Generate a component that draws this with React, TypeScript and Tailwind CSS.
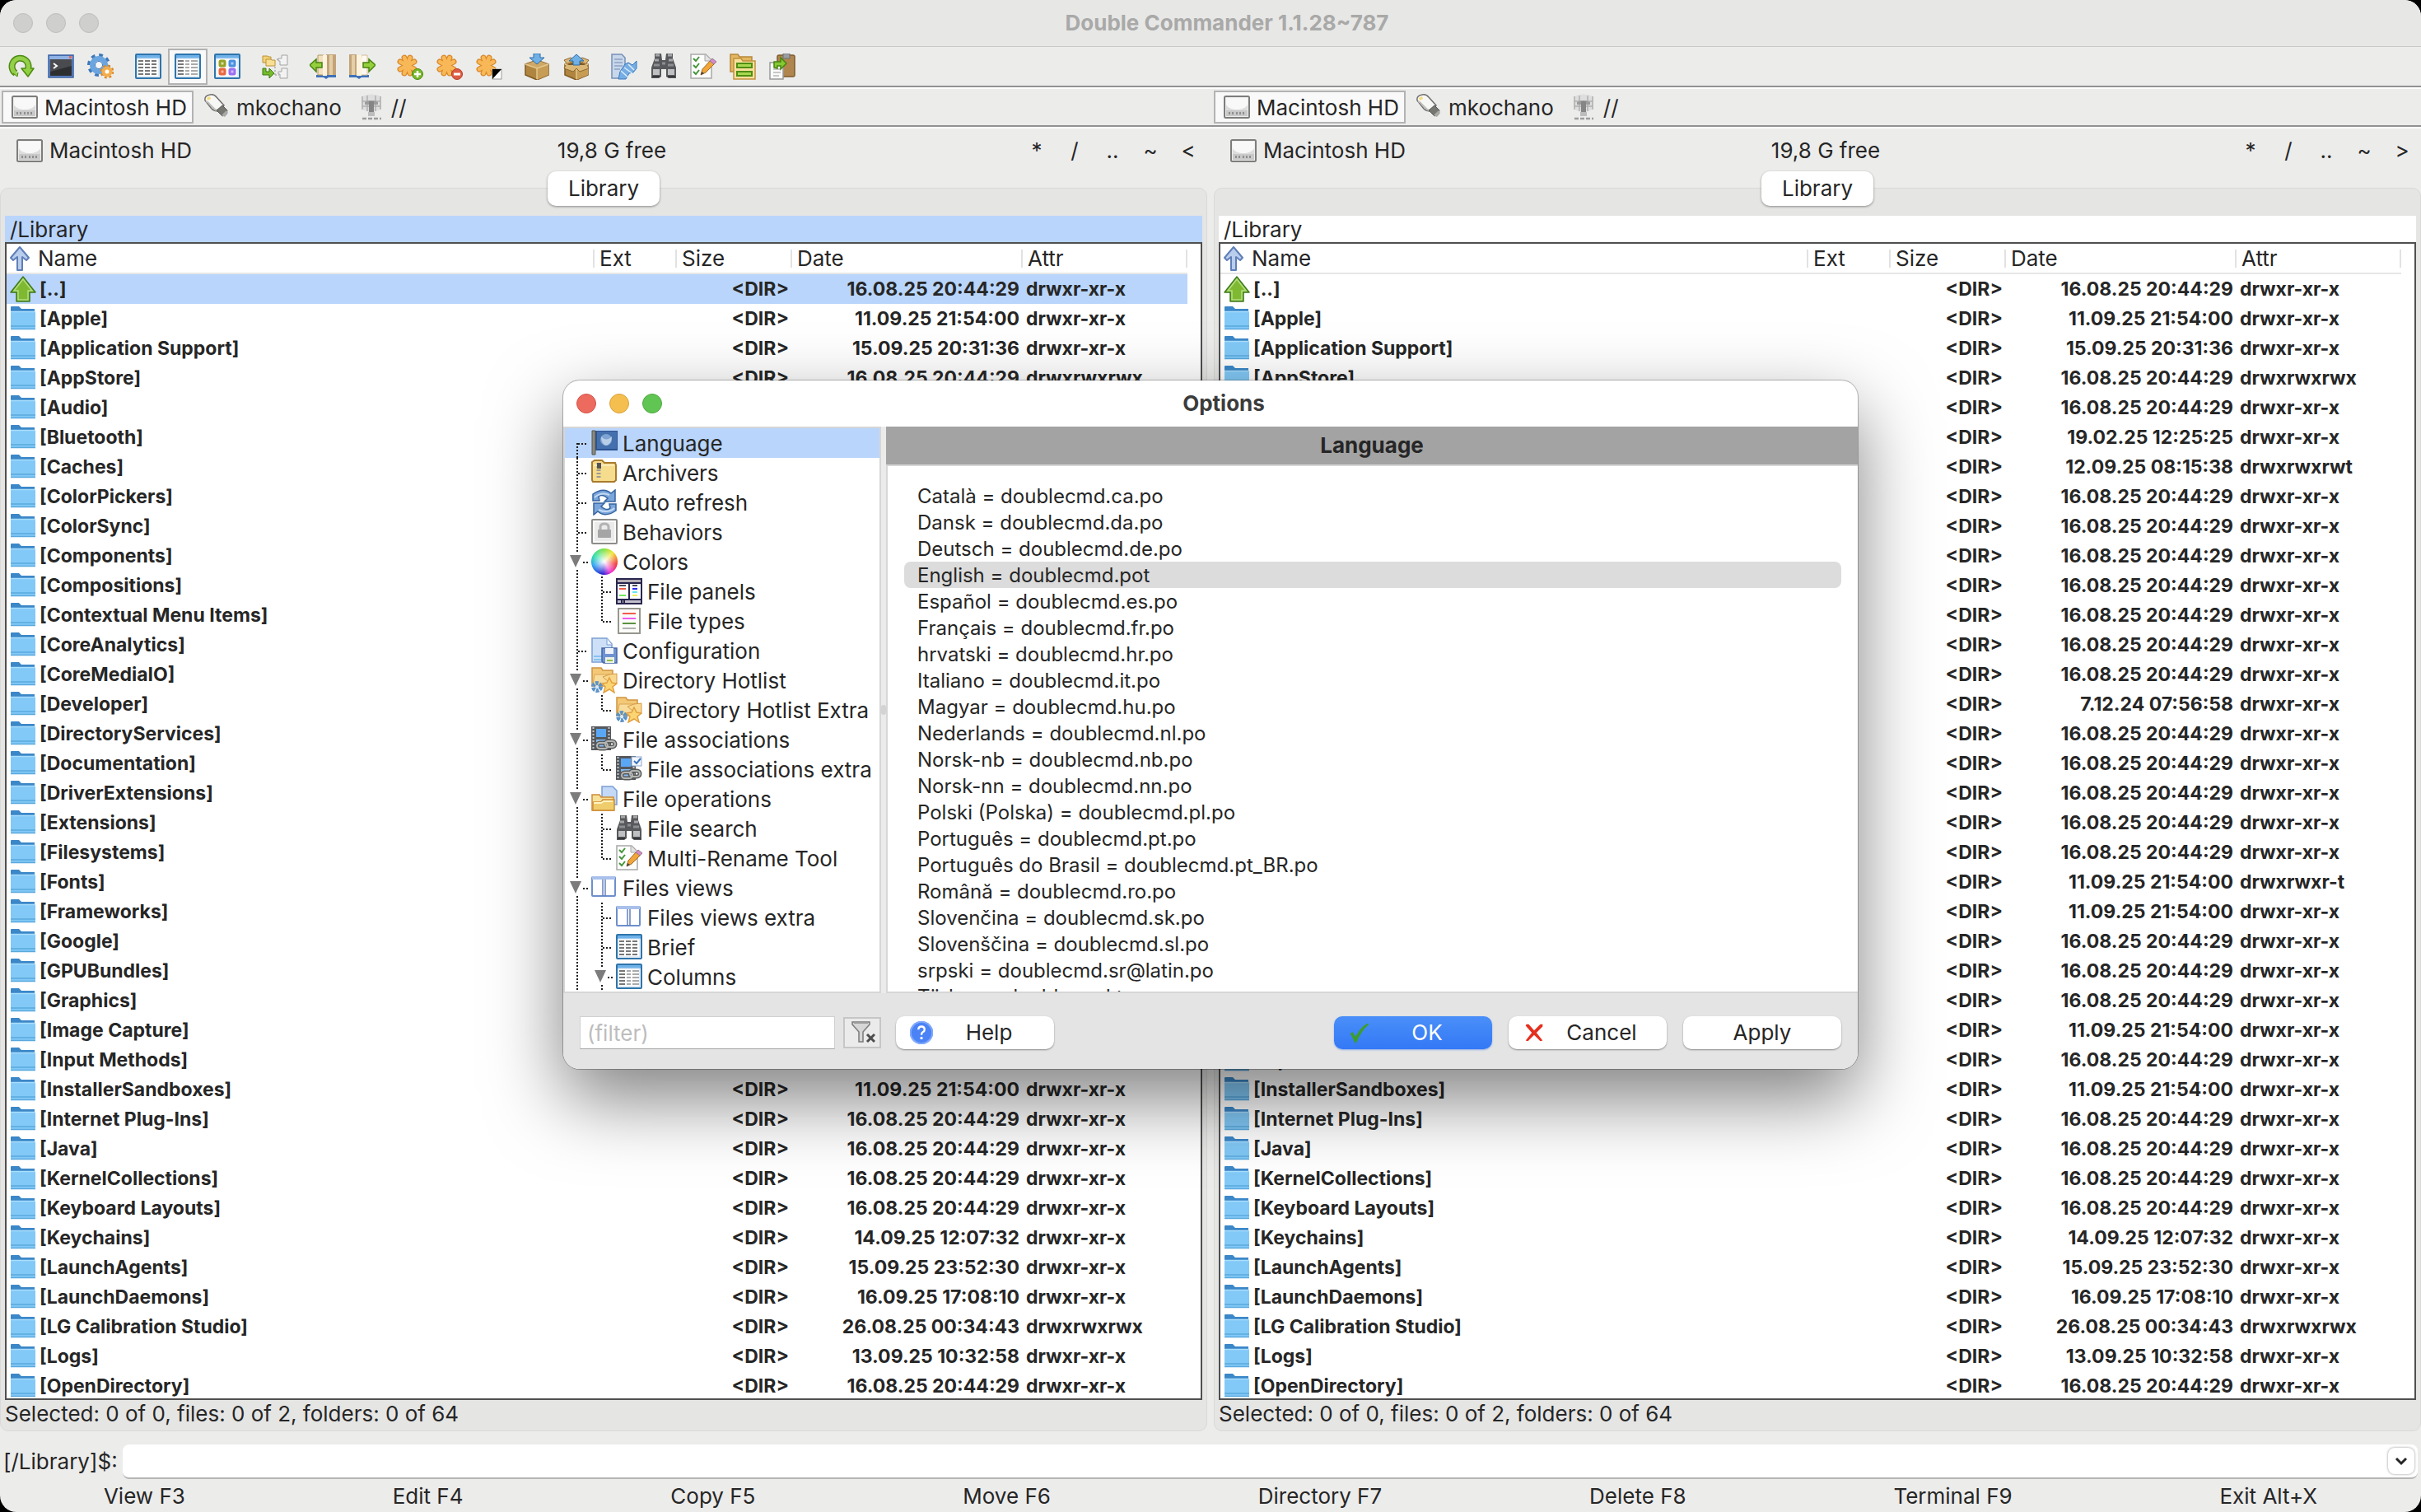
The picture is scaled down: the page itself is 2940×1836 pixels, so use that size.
import type { ReactNode } from 'react';
import clsx from 'clsx';

/* ---------- icons ---------- */

type IconName =
  | 'refresh' | 'terminal' | 'gears' | 'brief' | 'columns' | 'thumbs' | 'flat'
  | 'bookLeft' | 'bookRight' | 'starPlus' | 'starMinus' | 'starInvert'
  | 'pack' | 'extract' | 'compare' | 'binoculars' | 'rename' | 'sync' | 'paste'
  | 'disk' | 'usb' | 'network' | 'sort' | 'up' | 'folder'
  | 'flag' | 'archive' | 'autoRefresh' | 'lock' | 'wheel' | 'filePanels' | 'fileTypes'
  | 'config' | 'hotlist' | 'film' | 'filmCheck' | 'fileOps' | 'views'
  | 'filter' | 'help' | 'check' | 'cross';

const star = (
  <g stroke="#d98a2b" strokeWidth="7" strokeLinecap="round">
    <path d="M9 5l7 19M16 5L9 24M4 10l17 9M21 10L4 19" />
    <path d="M9 5l7 19M16 5L9 24M4 10l17 9M21 10L4 19" stroke="#f9b857" strokeWidth="4.500" />
  </g>
);

const sheetFrame = (
  <>
    <rect x="1" y="1" width="30" height="29" rx="1" fill="#fff" stroke="#2f74ab" strokeWidth="2" />
    <rect x="2" y="2" width="28" height="4" fill="#6fb2ea" />
    <rect x="3" y="6" width="26" height="22" fill="#fdfdfd" stroke="#c9dff1" />
  </>
);

const hotFolder = (
  <>
    <path d="M1 1h11l2 3h12v6h4l-4 13H1z" fill="#f3c877" stroke="#cf9440" strokeWidth="1.500" />
    <path d="M4 9h22l-4 13H2z" fill="#f8dc9b" stroke="#d9a452" />
    <path d="M14 12l8-3 9-1v11l-6 2z" fill="#f9d88d" stroke="#d49a45" />
    <circle cx="7" cy="24" r="4.500" fill="none" stroke="#5a93c8" strokeWidth="5" strokeDasharray="3.500 1.200" />
    <circle cx="7" cy="24" r="2" fill="#dce9f5" />
    <path d="M22 13l3 6 6 1-5 4 2 7-6-4-7 4 2-7-4-4 6-1z" fill="#fbd572" stroke="#e2a042" strokeWidth="1.500" />
  </>
);

const filmStrip = (
  <>
    <rect x="0" y="0" width="24" height="29" fill="#55585c" />
    <path d="M2.500 1v27M21.500 1v27" stroke="#c7c9cc" strokeWidth="2" strokeDasharray="2 2" />
    <rect x="6" y="3" width="12" height="10" fill="#5aa7f5" />
    <rect x="6" y="16" width="12" height="9" fill="#86bdf3" />
    <g fill="none" strokeWidth="5">
      <rect x="7" y="20" width="13" height="7" rx="3.500" stroke="#595b5b" />
      <rect x="17" y="18" width="12" height="7" rx="3.500" stroke="#595b5b" />
      <rect x="7" y="20" width="13" height="7" rx="3.500" stroke="#b4b6b4" strokeWidth="2" />
      <rect x="17" y="18" width="12" height="7" rx="3.500" stroke="#b4b6b4" strokeWidth="2" />
    </g>
  </>
);

const carton = (
  <>
    <path d="M2 13l14-5 14 5v13l-14 6-14-6z" fill="#b08540" stroke="#7f5a22" strokeWidth="1.500" />
    <path d="M16 18v14l14-6V13z" fill="#c79c55" />
    <path d="M2 13l14-5 14 5-14 5z" fill="#cfa866" />
    <path d="M2 13l14 5 14-5" fill="none" stroke="#e5c88d" strokeWidth="1.500" />
    <path d="M16 18v13" stroke="#e5c88d" strokeWidth="1.500" />
  </>
);

const columnWindow = (
  <>
    <rect x="1" y="3" width="28" height="23" rx="1" fill="#fff" stroke="#6f8fcb" strokeWidth="2" />
    <rect x="1" y="2" width="28" height="4" fill="#a9c0ea" />
    <path d="M14 6v20M17 6v20" stroke="#6681bd" strokeWidth="1.500" />
  </>
);

const icons: Record<IconName, ReactNode> = {
  refresh: (
    <>
      <path d="M9 24a10 10 0 1 1 14-3" fill="none" stroke="#4d8a12" strokeWidth="8" />
      <path d="M16 18h15l-7 10z" fill="#8fd13c" stroke="#4d8a12" strokeWidth="1.500" strokeLinejoin="round" />
      <path d="M9 24a10 10 0 1 1 14-3" fill="none" stroke="#93cf48" strokeWidth="5" />
      <path d="M6 24l5 4 1-5" fill="#93cf48" stroke="#4d8a12" />
    </>
  ),
  terminal: (
    <>
      <rect x="1" y="2" width="30" height="27" fill="#5b84c4" stroke="#3d62a5" strokeWidth="1.500" />
      <rect x="2" y="3" width="28" height="4" fill="#8fb2e6" />
      <rect x="26" y="3" width="3" height="3" fill="#e2695d" />
      <rect x="3" y="7" width="26" height="20" fill="#2d2e30" />
      <path d="M3 7h26v8L3 22z" fill="#4a4b4e" />
      <path d="M7 12l4 3-4 3" fill="none" stroke="#fff" strokeWidth="2" />
    </>
  ),
  gears: (
    <>
      <circle cx="14" cy="14" r="11.500" fill="none" stroke="#3f78ba" strokeWidth="5" strokeDasharray="4.500 4.500" />
      <circle cx="14" cy="14" r="8" fill="none" stroke="#6aa5df" strokeWidth="6" />
      <circle cx="14" cy="14" r="4.500" fill="#f4f6f8" stroke="#3f78ba" />
      <circle cx="24" cy="22" r="6.500" fill="none" stroke="#d98a2b" strokeWidth="4" strokeDasharray="2.600 2.500" />
      <circle cx="24" cy="22" r="4.500" fill="#fff" stroke="#f4ad4c" strokeWidth="4" />
    </>
  ),
  brief: (
    <>
      {sheetFrame}
      <path d="M4 9h6M12 9h6M20 9h6M4 13h6M12 13h6M20 13h6M4 17h6M12 17h6M20 17h6M4 21h6M12 21h6M20 21h6M4 25h6M12 25h6M20 25h6" stroke="#777" strokeWidth="2" />
    </>
  ),
  columns: (
    <>
      {sheetFrame}
      <path d="M4 9h7M4 13h7M4 17h7M4 21h7M4 25h7" stroke="#777" strokeWidth="2" />
      <path d="M13 9h5M20 9h8M13 13h5M20 13h8M13 17h5M20 17h8M13 21h5M20 21h8M13 25h5M20 25h8" stroke="#aaa" strokeWidth="2" />
    </>
  ),
  thumbs: (
    <>
      {sheetFrame}
      <rect x="7" y="9" width="6" height="6" rx="1" fill="#d9dea8" stroke="#93a324" strokeWidth="3" />
      <rect x="19" y="9" width="6" height="6" rx="1" fill="#a5cef7" stroke="#4a8fe0" strokeWidth="3" />
      <rect x="7" y="19" width="6" height="6" rx="1" fill="#ffb79f" stroke="#e8673f" strokeWidth="3" />
      <rect x="19" y="19" width="6" height="6" rx="1" fill="#d2b8ff" stroke="#9a6ff0" strokeWidth="3" />
    </>
  ),
  flat: (
    <>
      <path d="M18 7h4M16 16v12M16 26h5" stroke="#aaa" strokeWidth="1.500" strokeDasharray="2 2" />
      <path d="M1 3h6l1 1h3v7H1z" fill="#f3d277" stroke="#bb9238" />
      <path d="M5 7h6l1 1h4v7H5z" fill="#f8df93" stroke="#bb9238" />
      <path d="M24 2h7v12h-9V9h-2V6h4z" fill="#f2f2f2" stroke="#a3a3a3" />
      <path d="M24 18h7v12h-9v-5h-2v-3h4z" fill="#f2f2f2" stroke="#a3a3a3" />
      <path d="M1 18h4v4h4v-4l6 6-6 6v-4H1z" fill="#75bb2c" stroke="#3c7a10" />
    </>
  ),
  bookLeft: (
    <>
      <path d="M8 26h24v3H23l-3 2-3-2H8z" fill="#3f72b8" />
      <path d="M10 2h7l4 24H10z" fill="#f3e0be" stroke="#b59763" />
      <path d="M20 1h12v25H20z" fill="#c3a479" />
      <path d="M24 2h4v24h-4z" fill="#e4cfa8" />
      <path d="M16 2h5v25h-5z" fill="#fdf3df" />
      <path d="M0 14l8-7v4h7v6H8v5z" fill="#96cf3d" stroke="#47840f" strokeWidth="1.500" />
    </>
  ),
  bookRight: (
    <>
      <path d="M0 26h24v3h-9l-3 2-3-2H0z" fill="#3f72b8" />
      <path d="M15 2h7v24h-9z" fill="#fdf9f0" stroke="#d2bd94" />
      <path d="M0 1h9v25H0z" fill="#c3a479" />
      <path d="M3 2h4v24H3z" fill="#e4cfa8" />
      <path d="M9 2h6v25H9z" fill="#fdf3df" />
      <path d="M32 14l-8-7v4h-7v6h7v5z" fill="#96cf3d" stroke="#47840f" strokeWidth="1.500" />
    </>
  ),
  starPlus: (
    <>
      {star}
      <circle cx="25" cy="25" r="6.500" fill="#79b72a" stroke="#4c8a10" />
      <path d="M25 21v8M21 25h8" stroke="#fff" strokeWidth="2.500" />
    </>
  ),
  starMinus: (
    <>
      {star}
      <circle cx="25" cy="25" r="6.500" fill="#dd5c45" stroke="#b53a26" />
      <path d="M21 25h8" stroke="#fff" strokeWidth="3" />
    </>
  ),
  starInvert: (
    <>
      {star}
      <rect x="20" y="19" width="11" height="12" fill="#fff" stroke="#999" />
      <path d="M20 19h11L20 31z" fill="#000" />
    </>
  ),
  pack: (
    <>
      {carton}
      <path d="M12 0h8v5h5l-9 8-9-8h5z" fill="#6fb0e6" stroke="#2f6da8" />
    </>
  ),
  extract: (
    <>
      {carton}
      <path d="M4 13l12-4 12 4-12 4z" fill="#7f5a22" />
      <path d="M4 12L1 8l8-3 5 3M28 12l3-4-8-3-5 3M3 14l-2 4 11 4 4-4 4 4 11-4-2-4" fill="#dcb878" stroke="#8d6930" />
      <path d="M16 1l9 8h-5v5h-8V9H7z" fill="#6fb0e6" stroke="#2f6da8" />
    </>
  ),
  compare: (
    <>
      <path d="M1 1h12l4 4v25H1z" fill="#c8d7ea" stroke="#7590b5" strokeWidth="1.500" />
      <path d="M4 7h10M4 11h10M4 15h10M4 19h7" stroke="#8da4c4" strokeWidth="1.500" />
      <path d="M17 13l4-2 5 3 5-5v9l-4 5-5 1-4 7H9l2-9z" fill="#76aee4" stroke="#3b78bd" />
      <path d="M16 17l11 8M12 21l9 8M21 13l7 7" stroke="#dcecfa" strokeWidth="1.500" />
    </>
  ),
  binoculars: (
    <>
      <path d="M5 0h8l1 8h4l1-8h8v6l4 11v13h-9l-3-2v-9h-6v9l-3 2H1V17L5 6z" fill="#58595c" />
      <path d="M6 2h5M21 2h5M5 8h5M22 8h5" stroke="#a5a6a8" strokeWidth="3" />
      <path d="M3 19h8v7H3zM21 19h8v7h-8z" fill="#bfc0c2" />
      <path d="M4 14h7M21 14h7M14 12h4" stroke="#8d8e91" strokeWidth="3" />
      <path d="M2 28h9M21 28h9" stroke="#37383a" strokeWidth="2" />
    </>
  ),
  rename: (
    <>
      <path d="M1 1h18l7 7v22H1z" fill="#fdfdfd" stroke="#a8a8a8" strokeWidth="1.500" />
      <path d="M18 1v8h8" fill="#e3e3e3" stroke="#a8a8a8" />
      <path d="M4 6l3 3 4-5M4 14l3 3 4-5M4 22l3 3 4-5" fill="none" stroke="#44953b" strokeWidth="2" />
      <path d="M13 26l2-7 10-11 5 4-11 11z" fill="#f2a53a" stroke="#9d6a20" />
      <path d="M24 9l3-3 5 4-3 3z" fill="#d98ac6" stroke="#8f7a8c" />
      <path d="M13 26l1-4 3 2z" fill="#444" />
    </>
  ),
  sync: (
    <>
      <path d="M1 1h9l2 3h15v18H1z" fill="#e3b661" stroke="#b5873a" strokeWidth="1.500" />
      <path d="M5 6h9l2 3h15v22H5z" fill="#f8e09c" stroke="#c1913c" strokeWidth="1.500" />
      <rect x="9" y="12" width="18" height="5" fill="#a9d850" stroke="#4f8e14" strokeWidth="2" />
      <rect x="9" y="22" width="18" height="5" fill="#a9d850" stroke="#4f8e14" strokeWidth="2" />
    </>
  ),
  paste: (
    <>
      <rect x="10" y="2" width="21" height="26" rx="2" fill="#b0864e" stroke="#7f5b2b" strokeWidth="1.500" />
      <rect x="17" y="0" width="8" height="6" fill="#9a9da1" stroke="#6b6e72" />
      <path d="M1 11h16v20H1z" fill="#fafafa" stroke="#999" strokeWidth="1.500" />
      <path d="M5 19h9M5 23h9M5 27h7" stroke="#b7b7b7" strokeWidth="1.500" />
      <path d="M6 17v-7h8V5l7 7-7 7v-4h-4v3z" fill="#86c832" stroke="#47840f" strokeWidth="1.500" />
    </>
  ),
  disk: (
    <>
      <rect x="1" y="3" width="30" height="26" rx="1.500" fill="#ededed" stroke="#7d7d7b" strokeWidth="2" />
      <path d="M3 5h26v10c-5 8-21 8-26 0z" fill="#f8f8f8" />
      <path d="M3 13c4 8 22 8 26 0v7H3z" fill="#dcdcdc" />
      <rect x="3" y="20" width="26" height="7" fill="#c9c9c9" />
      <path d="M6 23.500h6M15 23.500h12" stroke="#8f8f8f" strokeWidth="3" strokeDasharray="2 2" />
    </>
  ),
  usb: (
    <>
      <path d="M2 8q-1-6 6-7 5-1 8 3l9 10-7 7q-5 0-8-3z" fill="#f7f7f5" stroke="#6e6e6e" strokeWidth="1.500" />
      <path d="M3 9q3 1 5 4l6 6q4 2 6 0" fill="none" stroke="#bdbdb9" strokeWidth="2" />
      <path d="M4 5l4-2 1 3-4 2z" fill="#f6dc78" />
      <path d="M16 20l7-6 6 6-1 5-5 2z" fill="#777772" stroke="#555" />
      <path d="M22 26l6-6 2 3-4 5z" fill="#a9a9a6" />
    </>
  ),
  network: (
    <>
      <path d="M4 3q12-5 24 0v15q-12 8-24 0z" fill="#dedede" />
      <path d="M5 3v16M11 2v19M21 2v19M27 3v16M5 9h22M5 15h22" stroke="#b0b0b0" strokeWidth="1.500" />
      <path d="M8 10q8-4 16 0v3H8z" fill="#9c9c9c" />
      <path d="M13 9h6v13h-6z" fill="#858585" />
      <path d="M12 22h8v5h-8z" fill="#bdbdbd" />
      <path d="M5 30h23" stroke="#9d9d9d" strokeWidth="2.500" strokeDasharray="5 2" />
    </>
  ),
  sort: (
    <path d="M16 2l11 13-3 3-5-4v16h-6V14l-5 4-3-3z" fill="#b9cdec" stroke="#5f7fb8" strokeWidth="2" strokeLinejoin="round" />
  ),
  up: (
    <>
      <path d="M16 1l15 19h-7v11H8V20H1z" fill="#7fb932" stroke="#3d7a1c" strokeWidth="1.500" strokeLinejoin="round" />
      <path d="M16 4l11 14h-5v11H10V18H5z" fill="none" stroke="#b5dd80" strokeWidth="1.500" />
    </>
  ),
  folder: (
    <>
      <path d="M1 2q0-1 1-1h9l3 3h16v6H1z" fill="#3b87c8" />
      <path d="M1 7h30v20q0 2-2 2H3q-2 0-2-2z" fill="#82c9f7" />
      <path d="M1 7.500h30" stroke="#a9defc" strokeWidth="1.500" />
      <path d="M1 25h30M1 28.500h30" stroke="#5aa9dd" strokeWidth="1.500" />
    </>
  ),
  flag: (
    <>
      <path d="M5 1h27v24H5z" fill="#2d5391" />
      <path d="M7 2h24v21H7z" fill="#4470ad" />
      <circle cx="18" cy="12" r="7" fill="#7da4d2" />
      <path d="M12 8q6 7 13 0 0 9-7 11-6-2-6-11z" fill="#b9cfe8" />
      <path d="M1 1h4v29H1z" fill="#8b8b83" stroke="#55554f" />
    </>
  ),
  archive: (
    <>
      <path d="M1 3l3-2h9l3 3h13l1 3v18l-2 2H2l-1-2z" fill="#f6dc8d" stroke="#a87b2c" strokeWidth="2" />
      <path d="M3 7h25" stroke="#fdf1c4" strokeWidth="1.500" />
      <path d="M9 4v20" stroke="#9b9b93" strokeWidth="5" strokeDasharray="2 2" />
      <rect x="7" y="4" width="5" height="7" fill="#555" />
    </>
  ),
  autoRefresh: (
    <>
      <path d="M2 14V6q13-9 22-1l5-4v14H16l4-4Q13 5 9 9l1 5z" fill="#7ba6db" stroke="#35639f" strokeWidth="1.500" />
      <path d="M30 18v8q-13 9-22 1l-5 4V17h13l-4 4q7 6 11 2l-1-5z" fill="#7ba6db" stroke="#35639f" strokeWidth="1.500" />
      <path d="M4 10Q12 3 22 7M28 23Q20 30 9 25" fill="none" stroke="#c4daf3" strokeWidth="2" />
    </>
  ),
  lock: (
    <>
      <rect x="1" y="1" width="30" height="29" rx="1" fill="#ebebeb" stroke="#8d8d89" strokeWidth="2" />
      <rect x="3" y="3" width="26" height="25" fill="none" stroke="#fff" strokeWidth="1.500" />
      <path d="M11 14v-4q0-4 5-4t5 4v4" fill="none" stroke="#b3b3b3" strokeWidth="3" />
      <rect x="8" y="13" width="16" height="10" rx="1" fill="#a5a5a5" />
    </>
  ),
  wheel: (
    <foreignObject x="0" y="0" width="32" height="32">
      <div className="size-full rounded-full bg-[radial-gradient(circle,#fff_0%,#fff0_70%),conic-gradient(#7fe03a,#f2e62c_12%,#f03030_28%,#f02ad8_42%,#2218d0_52%,#1e9cf0_70%,#22e0a0_84%,#7fe03a)]" />
    </foreignObject>
  ),
  filePanels: (
    <>
      <rect x="1" y="1" width="30" height="30" fill="#fff" stroke="#28264f" strokeWidth="2" />
      <rect x="2" y="2" width="28" height="3" fill="#b5aeb5" />
      <path d="M2 6h28M16 5v21M2 26h28" stroke="#28264f" strokeWidth="2" />
      <rect x="2" y="27" width="28" height="3" fill="#c3c0cc" />
      <path d="M4 9h8" stroke="#4a4a5a" strokeWidth="2" />
      <path d="M4 13h8" stroke="#f05c4c" strokeWidth="2" />
      <path d="M4 21h8" stroke="#74e860" strokeWidth="2" />
      <path d="M20 9h6" stroke="#4a4a5a" strokeWidth="2" />
      <path d="M20 13h6" stroke="#2a2af0" strokeWidth="2" />
      <path d="M20 17h6" stroke="#66e6f0" strokeWidth="2" />
      <path d="M20 21h6" stroke="#f2ee62" strokeWidth="2" />
      <path d="M7 27v3M10 27v3" stroke="#28264f" strokeWidth="2" />
    </>
  ),
  fileTypes: (
    <>
      <rect x="3" y="1" width="26" height="30" fill="#fbfbf9" stroke="#96968f" strokeWidth="2" />
      <path d="M8 7h16" stroke="#f05c4c" strokeWidth="2" />
      <path d="M8 13h16" stroke="#ee5cf0" strokeWidth="2" />
      <path d="M8 19h16" stroke="#59923f" strokeWidth="2" />
      <path d="M8 25h16" stroke="#b1b1b1" strokeWidth="2" />
    </>
  ),
  config: (
    <>
      <path d="M1 1h18l6 7v22H1z" fill="#cde0f7" stroke="#7b9fd4" strokeWidth="1.500" />
      <path d="M19 1v8h6" fill="#eef5fd" stroke="#7b9fd4" />
      <path d="M3 23h10M3 27h10" stroke="#86c2ee" strokeWidth="2" />
      <path d="M13 13h18v18H15l-2-2z" fill="#6f93d0" stroke="#4667a6" strokeWidth="1.500" />
      <rect x="17" y="13" width="10" height="7" fill="#eef2f8" />
      <rect x="17" y="24" width="11" height="7" fill="#eef2e6" />
      <path d="M19 28h7" stroke="#8cc04a" strokeWidth="2" />
    </>
  ),
  hotlist: hotFolder,
  film: filmStrip,
  filmCheck: (
    <>
      {filmStrip}
      <rect x="19" y="1" width="12" height="11" fill="#f3f7fc" stroke="#8ea8cd" />
      <path d="M22 6l3 3 5-6" fill="none" stroke="#3c76c2" strokeWidth="2" />
    </>
  ),
  fileOps: (
    <>
      <path d="M13 1h13l5 5v17H13z" fill="#c3d9f6" stroke="#7b9fd4" strokeWidth="1.500" />
      <path d="M1 11h9l2 3h15v16H1z" fill="#f7e29a" stroke="#d08c36" strokeWidth="1.500" />
      <path d="M2 20h10l2-3h14v13H2z" fill="#efcd6c" stroke="#d08c36" strokeWidth="1.500" />
      <path d="M3 21h9l3-2h11" fill="none" stroke="#fff3c4" strokeWidth="2" />
    </>
  ),
  views: columnWindow,
  filter: (
    <>
      <path d="M4 3h21v3l-8 9v12h-5V15L4 6z" fill="#d6d6d6" stroke="#7b7b7b" strokeWidth="1.500" />
      <path d="M6 4h17" stroke="#9c9c9c" strokeWidth="2" />
      <path d="M22 18l9 9M31 18l-9 9" stroke="#4e4e4e" strokeWidth="3" />
    </>
  ),
  help: (
    <>
      <circle cx="16" cy="16" r="15" fill="#4b83f6" />
      <circle cx="16" cy="16" r="14" fill="none" stroke="#82aafa" strokeWidth="2" />
      <path d="M12 12q0-4 4-4t4 4q0 2-2 3t-2 4" fill="none" stroke="#fff" strokeWidth="2.500" />
      <rect x="14.500" y="21.500" width="3" height="3" fill="#fff" />
    </>
  ),
  check: <path d="M4 17l3-2 4 6Q17 9 26 4l2 1Q17 15 12 29h-2z" fill="#3c9d2d" />,
  cross: <path d="M6 5h3l7 8 8-8h3v3l-8 8 8 10-3 1-8-8-8 8-3-1 8-10-8-9z" fill="#e5301f" />,
};

function Icon({ name, className = 'size-8' }: { name: IconName; className?: string }) {
  return (
    <svg viewBox="0 0 32 32" fill="none" aria-hidden="true" className={clsx('shrink-0', className)}>
      {icons[name]}
    </svg>
  );
}

/* ---------- data ---------- */

const toolbar: { name: IconName; label: string }[][] = [
  [
    { name: 'refresh', label: 'Refresh' },
    { name: 'terminal', label: 'Run terminal' },
    { name: 'gears', label: 'Options' },
  ],
  [
    { name: 'brief', label: 'Brief view' },
    { name: 'columns', label: 'Columns view' },
    { name: 'thumbs', label: 'Thumbnails view' },
  ],
  [{ name: 'flat', label: 'Flat view' }],
  [
    { name: 'bookLeft', label: 'Open left' },
    { name: 'bookRight', label: 'Open right' },
  ],
  [
    { name: 'starPlus', label: 'Select a group' },
    { name: 'starMinus', label: 'Unselect a group' },
    { name: 'starInvert', label: 'Invert selection' },
  ],
  [
    { name: 'pack', label: 'Pack files' },
    { name: 'extract', label: 'Extract files' },
  ],
  [
    { name: 'compare', label: 'Compare' },
    { name: 'binoculars', label: 'Search' },
    { name: 'rename', label: 'Multi-rename' },
    { name: 'sync', label: 'Synchronize' },
    { name: 'paste', label: 'Copy names' },
  ],
];

const drives: { icon: IconName; label: string }[] = [
  { icon: 'disk', label: 'Macintosh HD' },
  { icon: 'usb', label: 'mkochano' },
  { icon: 'network', label: '//' },
];

const AUG = '16.08.25 20:44:29';
const SEP = '11.09.25 21:54:00';

const files: [name: string, date?: string, attr?: string][] = [
  ['..'],
  ['Apple', SEP],
  ['Application Support', '15.09.25 20:31:36'],
  ['AppStore', AUG, 'drwxrwxrwx'],
  ['Audio'],
  ['Bluetooth', '19.02.25 12:25:25'],
  ['Caches', '12.09.25 08:15:38', 'drwxrwxrwt'],
  ['ColorPickers'],
  ['ColorSync'],
  ['Components'],
  ['Compositions'],
  ['Contextual Menu Items'],
  ['CoreAnalytics'],
  ['CoreMediaIO'],
  ['Developer', '7.12.24 07:56:58'],
  ['DirectoryServices'],
  ['Documentation'],
  ['DriverExtensions'],
  ['Extensions'],
  ['Filesystems'],
  ['Fonts', SEP, 'drwxrwxr-t'],
  ['Frameworks', SEP],
  ['Google'],
  ['GPUBundles'],
  ['Graphics'],
  ['Image Capture', SEP],
  ['Input Methods'],
  ['InstallerSandboxes', SEP],
  ['Internet Plug-Ins'],
  ['Java'],
  ['KernelCollections'],
  ['Keyboard Layouts'],
  ['Keychains', '14.09.25 12:07:32'],
  ['LaunchAgents', '15.09.25 23:52:30'],
  ['LaunchDaemons', '16.09.25 17:08:10'],
  ['LG Calibration Studio', '26.08.25 00:34:43', 'drwxrwxrwx'],
  ['Logs', '13.09.25 10:32:58'],
  ['OpenDirectory'],
];

const languages = [
  'Català = doublecmd.ca.po',
  'Dansk = doublecmd.da.po',
  'Deutsch = doublecmd.de.po',
  'English = doublecmd.pot',
  'Español = doublecmd.es.po',
  'Français = doublecmd.fr.po',
  'hrvatski = doublecmd.hr.po',
  'Italiano = doublecmd.it.po',
  'Magyar = doublecmd.hu.po',
  'Nederlands = doublecmd.nl.po',
  'Norsk-nb = doublecmd.nb.po',
  'Norsk-nn = doublecmd.nn.po',
  'Polski (Polska) = doublecmd.pl.po',
  'Português = doublecmd.pt.po',
  'Português do Brasil = doublecmd.pt_BR.po',
  'Română = doublecmd.ro.po',
  'Slovenčina = doublecmd.sk.po',
  'Slovenščina = doublecmd.sl.po',
  'srpski = doublecmd.sr@latin.po',
  'Türkçe = doublecmd.tr.po',
];

type TreeNode = { label: string; icon: IconName; open?: boolean; child?: boolean; last?: boolean };

const tree: TreeNode[] = [
  { label: 'Language', icon: 'flag' },
  { label: 'Archivers', icon: 'archive' },
  { label: 'Auto refresh', icon: 'autoRefresh' },
  { label: 'Behaviors', icon: 'lock' },
  { label: 'Colors', icon: 'wheel', open: true },
  { label: 'File panels', icon: 'filePanels', child: true },
  { label: 'File types', icon: 'fileTypes', child: true, last: true },
  { label: 'Configuration', icon: 'config' },
  { label: 'Directory Hotlist', icon: 'hotlist', open: true },
  { label: 'Directory Hotlist Extra', icon: 'hotlist', child: true, last: true },
  { label: 'File associations', icon: 'film', open: true },
  { label: 'File associations extra', icon: 'filmCheck', child: true, last: true },
  { label: 'File operations', icon: 'fileOps', open: true },
  { label: 'File search', icon: 'binoculars', child: true },
  { label: 'Multi-Rename Tool', icon: 'rename', child: true, last: true },
  { label: 'Files views', icon: 'views', open: true },
  { label: 'Files views extra', icon: 'views', child: true },
  { label: 'Brief', icon: 'brief', child: true },
  { label: 'Columns', icon: 'columns', child: true, open: true },
];

const commands = [
  'View F3',
  'Edit F4',
  'Copy F5',
  'Move F6',
  'Directory F7',
  'Delete F8',
  'Terminal F9',
  'Exit Alt+X',
];

/* ---------- main window ---------- */

function DriveBar() {
  return (
    <div className="flex">
      {drives.map((drive, i) => (
        <button
          key={drive.label}
          className={clsx(
            'flex h-10 items-center gap-2 border-2 pr-1.5 pl-2.5',
            i === 0 ? 'border-[#b3b3b3] bg-[#f9f9f9]' : 'border-transparent',
          )}
        >
          <Icon name={drive.icon} />
          <span className="pt-0.5">{drive.label}</span>
        </button>
      ))}
    </div>
  );
}

function HeaderCell({ children }: { children: ReactNode }) {
  return (
    <th className="border-b-2 border-[#e6e6e6] p-0 font-normal">
      <div className="flex h-[22px] items-center border-r-2 border-[#e2e2e2] pl-1.5">{children}</div>
    </th>
  );
}

function FilePanel({ active, arrow }: { active?: boolean; arrow: string }) {
  return (
    <section className="flex min-h-0 flex-col">
      <div className="flex h-[54px] shrink-0 items-center">
        <div className="w-[250px] pl-5">
          <button className="flex items-center gap-2">
            <Icon name="disk" />
            Macintosh HD
          </button>
        </div>
        <p className="flex-1 text-center">19,8 G free</p>
        <nav className="flex">
          {['*', '/', '..', '~', arrow].map((label) => (
            <button key={label} className="w-[46px] text-center">
              {label}
            </button>
          ))}
        </nav>
      </div>

      <div className="mt-[18px] flex min-h-0 flex-1 flex-col rounded-[10px] border border-[#d9d9d8] bg-[#e5e5e4] px-[5px]">
        <button className="-mt-[21px] h-[42px] w-[136px] shrink-0 self-center rounded-[10px] bg-white text-center shadow-[0_1px_3px_rgba(0,0,0,0.4)]">
          Library
        </button>
        <p className={clsx('mt-3 h-8 shrink-0 pl-1.5 leading-[34px]', active ? 'bg-[#b9d5fb]' : 'bg-white')}>
          /Library
        </p>
        <div className="min-h-0 flex-1 overflow-hidden border-2 border-[#4f4f4f] bg-white pr-4">
          <table className="w-full table-fixed border-collapse text-left whitespace-nowrap">
            <colgroup>
              <col />
              <col className="w-[100px]" />
              <col className="w-[140px]" />
              <col className="w-[280px]" />
              <col className="w-[200px]" />
            </colgroup>
            <thead>
              <tr className="h-9">
                <HeaderCell>
                  <Icon name="sort" className="-ml-1.5 size-8" />
                  <span className="pl-1.5">Name</span>
                </HeaderCell>
                <HeaderCell>Ext</HeaderCell>
                <HeaderCell>Size</HeaderCell>
                <HeaderCell>Date</HeaderCell>
                <HeaderCell>Attr</HeaderCell>
              </tr>
            </thead>
            <tbody className="text-[23px] font-bold">
              {files.map(([name, date = AUG, attr = 'drwxr-xr-x'], i) => (
                <tr key={name} className={clsx('h-9', active && i === 0 && 'bg-[#b9d5fb]')}>
                  <td className="p-0">
                    <div className="flex h-9 items-center gap-1 pl-1">
                      <Icon name={i === 0 ? 'up' : 'folder'} />
                      <span>[{name}]</span>
                    </div>
                  </td>
                  <td className="p-0" />
                  <td className="p-0 pr-1 text-right">&lt;DIR&gt;</td>
                  <td className="p-0 pr-1 text-right">{date}</td>
                  <td className="p-0 pl-1">{attr}</td>
                </tr>
              ))}
            </tbody>
          </table>
        </div>
        <p className="h-[37px] shrink-0 leading-[34px]">Selected: 0 of 0, files: 0 of 2, folders: 0 of 64</p>
      </div>
    </section>
  );
}

/* ---------- options dialog ---------- */

function Branch({ open, last, first }: { open?: boolean; last?: boolean; first?: boolean }) {
  return (
    <svg viewBox="0 0 32 36" fill="none" aria-hidden="true" className="h-9 w-8 shrink-0">
      <g stroke="#1d1d1d" strokeWidth="2" strokeDasharray="2 2">
        {open ? (
          <>
            <path d="M15 0v7M15 28v8" />
            <path d="M22 19h8" />
          </>
        ) : (
          <>
            <path d={first ? 'M15 18v18' : last ? 'M15 0v20' : 'M15 0v36'} />
            <path d="M16 19h12" />
          </>
        )}
      </g>
      {open && <path d="M6 10h14l-7 15z" fill="#7c7c7c" />}
    </svg>
  );
}

function Rail() {
  return (
    <svg viewBox="0 0 30 36" fill="none" aria-hidden="true" className="h-9 w-[30px] shrink-0">
      <path d="M15 0v36" stroke="#1d1d1d" strokeWidth="2" strokeDasharray="2 2" />
    </svg>
  );
}

function DialogButton({ icon, label, primary }: { icon?: IconName; label: string; primary?: boolean }) {
  return (
    <button
      className={clsx(
        'flex h-10 w-48 items-center rounded-[10px]',
        icon && 'pr-3 pl-4',
        primary
          ? 'bg-linear-to-b from-[#4a8ff8] to-[#3478f6] text-white shadow-[0_1px_2px_rgba(52,120,246,0.5)]'
          : 'bg-white shadow-[0_1px_2px_rgba(0,0,0,0.4)]',
      )}
    >
      {icon && <Icon name={icon} className="size-[30px]" />}
      <span className="flex-1 text-center">{label}</span>
    </button>
  );
}

function OptionsDialog() {
  return (
    <div
      role="dialog"
      aria-label="Options"
      className="absolute top-[462px] left-1/2 flex h-[836px] w-[1572px] -translate-x-1/2 flex-col overflow-hidden rounded-[20px] bg-white shadow-[0_0_0_1px_rgba(0,0,0,0.25),0_36px_90px_rgba(0,0,0,0.5)]"
    >
      <header className="flex h-14 shrink-0 items-center pl-4">
        <div className="flex w-26 gap-4">
          <button aria-label="Close" className="size-6 rounded-full border border-[#d5544a] bg-[#ec6a5e]" />
          <button aria-label="Minimize" className="size-6 rounded-full border border-[#d9a13c] bg-[#f4bf4f]" />
          <button aria-label="Zoom" className="size-6 rounded-full border border-[#4faa3f] bg-[#61c554]" />
        </div>
        <h1 className="flex-1 pr-[88px] text-center font-bold text-[#3c3c3c]">Options</h1>
      </header>

      <div className="flex min-h-0 flex-1">
        <ul className="w-[386px] shrink-0 overflow-hidden border-2 border-[#d6d6d6]">
          {tree.map((node, i) => (
            <li key={node.label} className={clsx('flex h-9 items-center', i === 0 && 'bg-[#b9d5fb]')}>
              {node.child && <Rail />}
              <Branch open={node.open} last={node.last} first={i === 0} />
              <Icon name={node.icon} />
              <span className="pt-0.5 pl-1.5 whitespace-nowrap">{node.label}</span>
            </li>
          ))}
        </ul>
        <div className="flex w-1.5 items-center bg-[#ebebeb]">
          <span className="h-3 w-1.5 rounded-full bg-[#d3d3d3]" />
        </div>
        <div className="flex min-w-0 flex-1 flex-col">
          <h2 className="h-[46px] shrink-0 bg-[#a3a3a3] text-center leading-[46px] font-bold">Language</h2>
          <ul className="min-h-0 flex-1 overflow-hidden border-2 border-r-0 border-[#d6d6d6] px-5 pt-5">
            {languages.map((language) => (
              <li
                key={language}
                className={clsx(
                  'h-8 rounded-lg pl-4 text-[24px] leading-[34px]',
                  language.startsWith('English') && 'bg-[#dcdcdc]',
                )}
              >
                {language}
              </li>
            ))}
          </ul>
        </div>
      </div>

      <footer className="flex h-[92px] shrink-0 items-center gap-[18px] bg-[#e4e4e4] px-5 pt-1">
        <div className="flex items-center gap-2.5">
          <input
            aria-label="Filter"
            placeholder="(filter)"
            className="h-10 w-[310px] border border-[#d0d0d0] border-b-[#a8a8a8] bg-white px-2 placeholder:text-[#bdbdbd]"
          />
          <button
            aria-label="Clear filter"
            className="flex h-[38px] w-[46px] items-center justify-center border-2 border-[#c6c6c6] bg-[#ebebeb]"
          >
            <Icon name="filter" />
          </button>
        </div>
        <DialogButton icon="help" label="Help" />
        <div className="ml-auto flex gap-5">
          <DialogButton icon="check" label="OK" primary />
          <DialogButton icon="cross" label="Cancel" />
          <DialogButton label="Apply" />
        </div>
      </footer>
    </div>
  );
}

export default function App() {
  return (
    <div className="h-screen bg-black font-['Inter','Noto_Sans',sans-serif] text-[26px] leading-8 text-[#262626]">
      <div className="relative flex h-full flex-col overflow-hidden rounded-[20px] bg-[#ececeb]">
        <header className="flex h-[57px] shrink-0 items-center border-b border-[#c9c9c8] bg-[#e7e7e6] pl-4">
          <div className="flex w-26 gap-4">
            <button aria-label="Close window" className="size-6 rounded-full border border-[#bdbdbc] bg-[#cfcfce]" />
            <button aria-label="Minimize window" className="size-6 rounded-full border border-[#bdbdbc] bg-[#cfcfce]" />
            <button aria-label="Zoom window" className="size-6 rounded-full border border-[#bdbdbc] bg-[#cfcfce]" />
          </div>
          <h1 className="flex-1 pr-20 text-center font-bold text-[#a9a9a8]">Double Commander 1.1.28~787</h1>
        </header>

        <div className="flex h-[47px] shrink-0 items-center gap-2.5 px-0.5">
          {toolbar.map((group) => (
            <div key={group[0].name} className="flex">
              {group.map((item) => (
                <button
                  key={item.name}
                  aria-label={item.label}
                  className={clsx(
                    'flex h-11 w-12 items-center justify-center border-2',
                    item.name === 'columns' ? 'border-[#b3b3b3] bg-[#f9f9f9]' : 'border-transparent',
                  )}
                >
                  <Icon name={item.name} />
                </button>
              ))}
            </div>
          ))}
        </div>

        <div className="h-1 shrink-0 border-t-2 border-[#919191] bg-white" />
        <div className="grid h-11 shrink-0 grid-cols-2 items-center gap-2 px-0.5">
          <DriveBar />
          <DriveBar />
        </div>
        <div className="h-1 shrink-0 border-t-2 border-[#919191] bg-white" />

        <main className="grid min-h-0 flex-1 grid-cols-2 grid-rows-1 gap-2">
          <FilePanel active arrow="<" />
          <FilePanel arrow=">" />
        </main>

        <div className="mt-4 flex h-[42px] shrink-0 items-center gap-1.5 pr-1 pl-1">
          <label htmlFor="command">[/Library]$:</label>
          <div className="flex h-full flex-1 items-center rounded-lg border-b-2 border-[#b5b5b4] bg-white pr-1">
            <input id="command" className="h-full flex-1 rounded-lg px-2 outline-none" />
            <button
              aria-label="Command history"
              className="flex size-8 items-center justify-center rounded-lg bg-white shadow-[0_0_3px_rgba(0,0,0,0.45)]"
            >
              <svg viewBox="0 0 16 16" fill="none" className="size-4">
                <path d="M2 5l6 6 6-6" stroke="#262626" strokeWidth="3" />
              </svg>
            </button>
          </div>
        </div>
        <div className="flex h-10 shrink-0 items-center pt-0.5">
          {commands.map((command) => (
            <button key={command} className="flex-auto text-center">
              {command}
            </button>
          ))}
        </div>

        <OptionsDialog />
      </div>
    </div>
  );
}
